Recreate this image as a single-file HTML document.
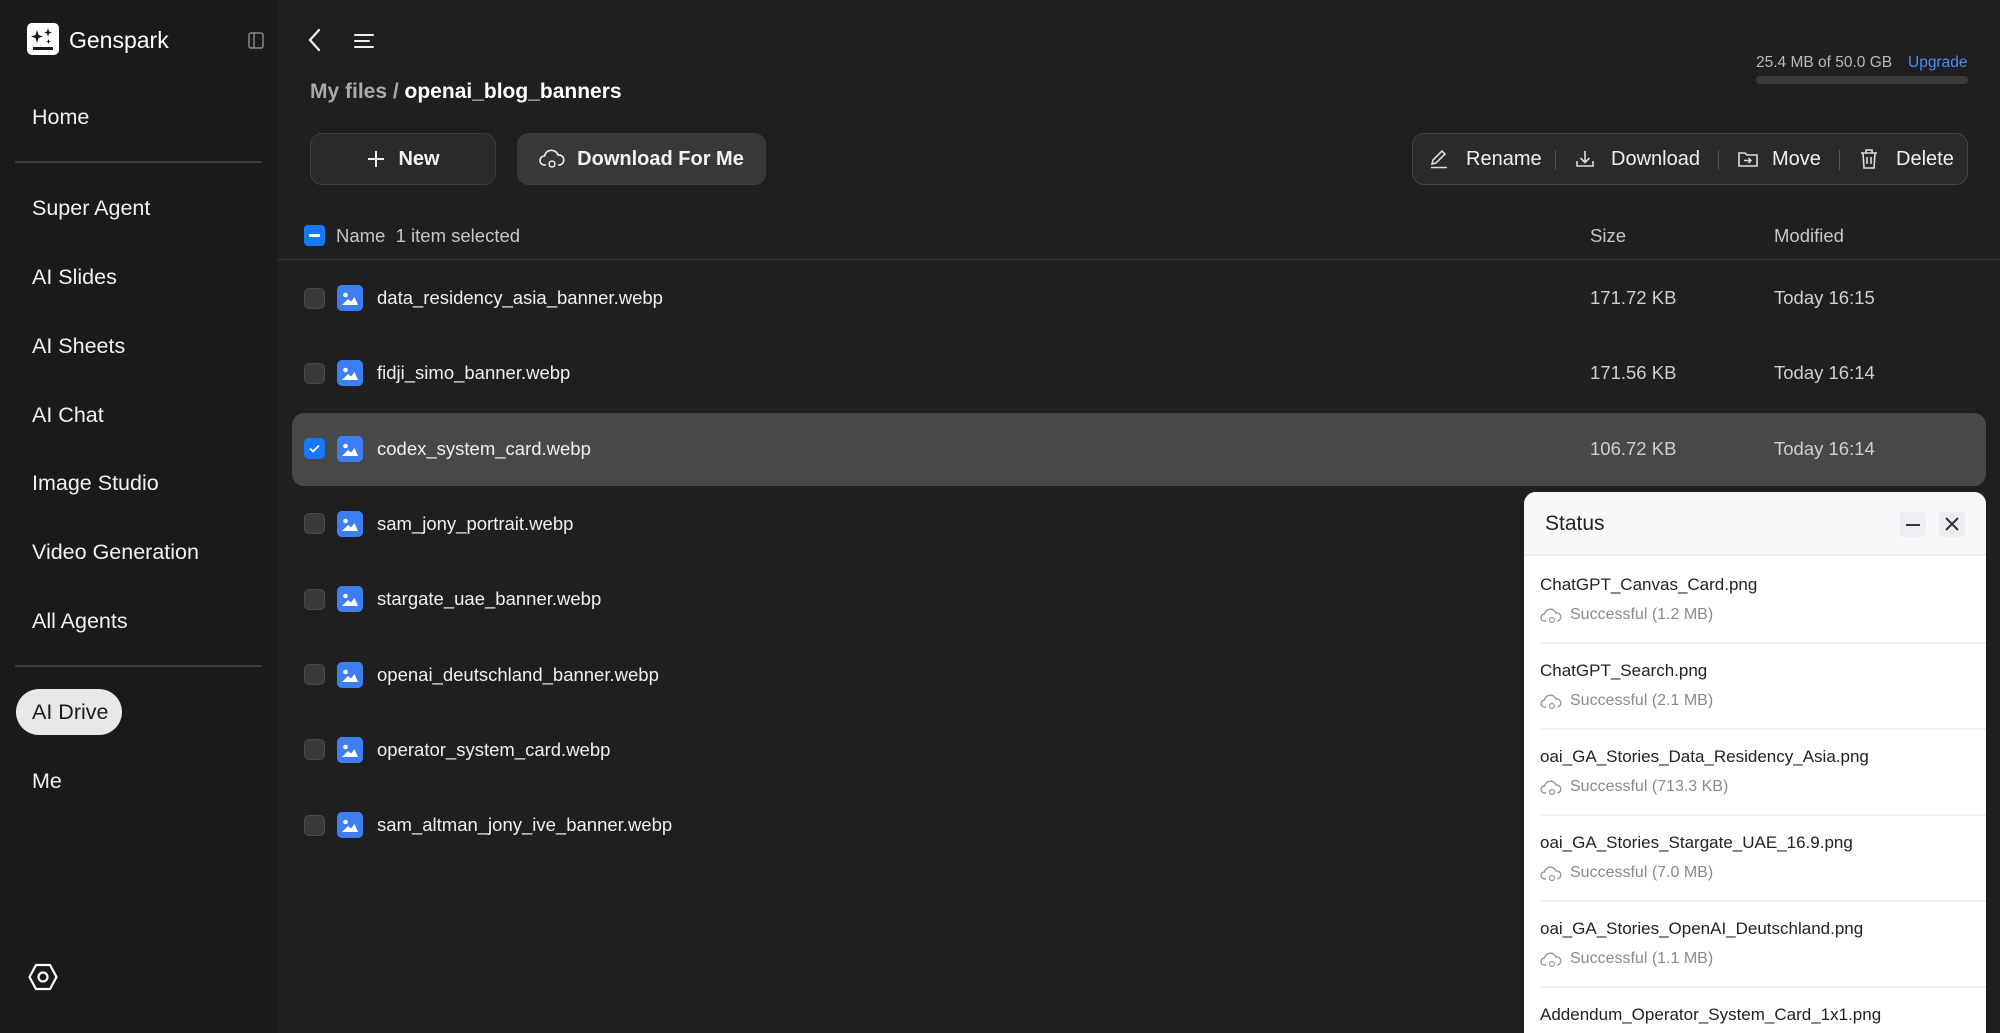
<!DOCTYPE html>
<html style="overflow:hidden;width:2000px;height:1033px"><head><meta charset="utf-8"><style>
*{box-sizing:border-box;margin:0;padding:0}
body{width:2000px;height:1033px;overflow:hidden;background:#1f1f1f;font-family:"Liberation Sans",Arial,sans-serif;color:#eee;position:relative}
.abs{position:absolute}
#side{left:0;top:0;width:277px;height:1033px;background:#1a1a1a}
.nav{position:absolute;left:32px;font-size:21.5px;color:#f2f2f2;line-height:26px}
.hr{position:absolute;left:15px;width:247px;height:2px;background:#3a3a3a}
.btn{position:absolute;top:133px;height:52px;border-radius:12px;border:1px solid #3d3d3d;display:flex;align-items:center;justify-content:center;font-size:20px;font-weight:bold;color:#f2f2f2;gap:12px}
.row{position:absolute;left:292px;width:1694px;height:73px;border-radius:12px}
.cb{position:absolute;left:304px;width:21px;height:21px;border-radius:5px;background:#3a3a3a;border:1px solid #4a4a4a}
.fi{position:absolute;left:337px;width:26px;height:26px;border-radius:5px;background:#3d7ef0}
.fn{position:absolute;left:377px;font-size:18.5px;color:#f0f0f0}
.sz{position:absolute;left:1590px;font-size:18.5px;color:#cfcfcf}
.dt{position:absolute;left:1774px;font-size:18.5px;color:#cfcfcf}
#panel{left:1524px;top:492px;width:462px;height:541px;background:#fff;border-radius:12px 12px 0 0;overflow:hidden}
.it{position:absolute;left:16px;right:0;height:86px;border-bottom:2px solid #f0f1f3}
.it .n{position:absolute;left:0;top:17px;font-size:17px;color:#222}
.it .s{position:absolute;left:30px;top:48px;font-size:16px;color:#8a8a8a}
.it svg{position:absolute;left:0;top:49px}
</style></head><body>
<div id="side" class="abs">
  <svg class="abs" style="left:27px;top:23px" width="32" height="32" viewBox="0 0 32 32"><rect width="32" height="32" rx="5" fill="#fff"/><path d="M10 7 L11.5 12 L16 13.5 L11.5 15 L10 20 L8.5 15 L4 13.5 L8.5 12Z" fill="#1a1a1a"/><path d="M21 5 L22 8.5 L25 9.5 L22 10.5 L21 14 L20 10.5 L17 9.5 L20 8.5Z" fill="#1a1a1a"/><path d="M21.5 16 L22.3 18 L24 18.5 L22.3 19 L21.5 21 L20.7 19 L19 18.5 L20.7 18Z" fill="#1a1a1a"/><rect x="6" y="24" width="20" height="3" fill="#1a1a1a"/></svg>
  <div class="abs" style="left:69px;top:27px;font-size:23px;color:#fff;font-weight:500">Genspark</div>
  <svg class="abs" style="left:248px;top:32px" width="16" height="17" viewBox="0 0 16 17"><rect x="1" y="1" width="14" height="15" rx="2" fill="none" stroke="#888" stroke-width="1.5"/><line x1="6" y1="1" x2="6" y2="16" stroke="#888" stroke-width="1.5"/></svg>
  <div class="nav" style="top:104px">Home</div>
  <div class="hr" style="top:161px"></div>
  <div class="nav" style="top:195px">Super Agent</div>
  <div class="nav" style="top:264px">AI Slides</div>
  <div class="nav" style="top:333px">AI Sheets</div>
  <div class="nav" style="top:402px">AI Chat</div>
  <div class="nav" style="top:470px">Image Studio</div>
  <div class="nav" style="top:539px">Video Generation</div>
  <div class="nav" style="top:608px">All Agents</div>
  <div class="hr" style="top:665px"></div>
  <div class="abs" style="left:16px;top:689px;width:106px;height:46px;border-radius:23px;background:#e8e8e8"></div>
  <div class="nav" style="top:699px;color:#1a1a1a">AI Drive</div>
  <div class="nav" style="top:768px">Me</div>
  <svg class="abs" style="left:28px;top:963px" width="30" height="28" viewBox="0 0 30 28"><path d="M8 2 H22 L28.5 14 L22 26 H8 L1.5 14Z" fill="none" stroke="#fff" stroke-width="2.2"/><circle cx="15" cy="14" r="4.5" fill="none" stroke="#fff" stroke-width="2.2"/></svg>
</div>

<svg class="abs" style="left:307px;top:28px" width="16" height="24" viewBox="0 0 16 24"><path d="M12 2 L3 12 L12 22" fill="none" stroke="#eee" stroke-width="2.2" stroke-linecap="round"/></svg>
<svg class="abs" style="left:353px;top:31px" width="22" height="18" viewBox="0 0 22 18"><path d="M2 4 H20 M2 10 H16 M2 16 H20" stroke="#eee" stroke-width="2" stroke-linecap="round"/></svg>

<div class="abs" style="left:1756px;top:54px;font-size:15.5px;color:#bbb">25.4 MB of 50.0 GB</div>
<div class="abs" style="left:1908px;top:54px;font-size:15.5px;color:#4b8ef5">Upgrade</div>
<div class="abs" style="left:1756px;top:76px;width:212px;height:8px;border-radius:4px;background:#3a3a3a"></div>

<div class="abs" style="left:310px;top:80px;font-size:21px;font-weight:bold"><span style="color:#aaa">My files / </span><span style="color:#fff">openai_blog_banners</span></div>

<div class="btn" style="left:310px;width:186px;background:#2a2a2a"><svg width="20" height="20" viewBox="0 0 20 20"><path d="M10 2V18M2 10H18" stroke="#eee" stroke-width="2"/></svg>New</div>
<div class="btn" style="left:517px;width:249px;background:#383838"><svg width="26" height="22" viewBox="0 0 26 22"><path d="M7 17 H5.5 A4.5 4.5 0 0 1 5.5 8 A7 7 0 0 1 19 7 A5 5 0 0 1 20.5 17 H19" fill="none" stroke="#eee" stroke-width="1.6"/><circle cx="13" cy="16" r="3" fill="none" stroke="#eee" stroke-width="1.4"/></svg>Download For Me</div>

<div class="abs" style="left:1412px;top:133px;width:556px;height:52px;border-radius:12px;border:1px solid #444;background:#2a2a2a;font-size:20px;color:#f0f0f0">
  <svg class="abs" style="left:16px;top:15px" width="20" height="20" viewBox="0 0 20 20"><path d="M3 15 L4 11 L13 2 L16 5 L7 14Z M2 18.5H18" fill="none" stroke="#ddd" stroke-width="1.6"/></svg>
  <span class="abs" style="left:53px;top:14px">Rename</span>
  <div class="abs" style="left:142px;top:16px;width:1px;height:20px;background:#555"></div>
  <svg class="abs" style="left:162px;top:15px" width="20" height="20" viewBox="0 0 20 20"><path d="M10 2V13M5.5 9L10 13.5 14.5 9M2 12V17H18V12" fill="none" stroke="#ddd" stroke-width="1.6"/></svg>
  <span class="abs" style="left:198px;top:14px">Download</span>
  <div class="abs" style="left:305px;top:16px;width:1px;height:20px;background:#555"></div>
  <svg class="abs" style="left:324px;top:15px" width="22" height="20" viewBox="0 0 22 20"><path d="M2 4H8L10 6H20V17H2Z" fill="none" stroke="#ddd" stroke-width="1.6"/><path d="M7 11.5H14M11.5 9L14 11.5 11.5 14" fill="none" stroke="#ddd" stroke-width="1.5"/></svg>
  <span class="abs" style="left:359px;top:14px">Move</span>
  <div class="abs" style="left:426px;top:16px;width:1px;height:20px;background:#555"></div>
  <svg class="abs" style="left:446px;top:14px" width="20" height="22" viewBox="0 0 20 22"><path d="M2 5H18M7 5V2H13V5M4 5L5 20H15L16 5M8 9V16M12 9V16" fill="none" stroke="#ddd" stroke-width="1.6"/></svg>
  <span class="abs" style="left:483px;top:14px">Delete</span>
</div>

<div class="abs" style="left:304px;top:225px;width:21px;height:21px;border-radius:4px;background:#1677ff"><div style="position:absolute;left:5px;top:9px;width:11px;height:3px;background:#fff;border-radius:1px"></div></div>
<div class="abs" style="left:336px;top:225px;font-size:18.5px;color:#c8c8c8">Name&nbsp;&nbsp;1 item selected</div>
<div class="abs" style="left:1590px;top:225px;font-size:18.5px;color:#c8c8c8">Size</div>
<div class="abs" style="left:1774px;top:225px;font-size:18.5px;color:#c8c8c8">Modified</div>
<div class="abs" style="left:277px;top:259px;width:1723px;height:1px;background:#333"></div>

<div class="row" style="top:413px;background:#484848"></div>

<div id="rows"></div>
<script>
var f=[["data_residency_asia_banner.webp","171.72 KB","Today 16:15"],["fidji_simo_banner.webp","171.56 KB","Today 16:14"],["codex_system_card.webp","106.72 KB","Today 16:14"],["sam_jony_portrait.webp"],["stargate_uae_banner.webp"],["openai_deutschland_banner.webp"],["operator_system_card.webp"],["sam_altman_jony_ive_banner.webp"]];
var h="";
f.forEach(function(r,i){var c=298+i*75.3;
var sel=i==2;
h+='<div class="cb" style="top:'+(c-10.5)+'px;'+(sel?'background:#1677ff;border-color:#1677ff':'')+'">'+(sel?'<svg width="19" height="19" viewBox="0 0 19 19"><path d="M5 9.5L8 12.5 14 6.5" fill="none" stroke="#fff" stroke-width="1.8"/></svg>':'')+'</div>';
h+='<svg class="fi" style="top:'+(c-13)+'px" viewBox="0 0 26 26"><rect width="26" height="26" rx="5" fill="#3d7ef0"/><circle cx="8.5" cy="10" r="2.3" fill="#fff"/><path d="M5 20 L11 14 L14 16.5 L17.5 12 L21 20Z" fill="#fff"/></svg>';
h+='<div class="fn" style="top:'+(c-11)+'px">'+r[0]+'</div>';
if(r[1]){h+='<div class="sz" style="top:'+(c-11)+'px">'+r[1]+'</div><div class="dt" style="top:'+(c-11)+'px">'+r[2]+'</div>';}
});
document.getElementById("rows").innerHTML=h;
</script>

<div id="panel" class="abs">
  <div class="abs" style="left:0;top:0;width:462px;height:64px;background:#f7f8fa;border-bottom:2px solid #eceef1"></div>
  <div class="abs" style="left:21px;top:20px;font-size:21px;color:#222">Status</div>
  <div class="abs" style="left:376px;top:20px;width:26px;height:25px;border-radius:4px;background:#eceef1"><div style="position:absolute;left:6px;top:12px;width:14px;height:2px;background:#333"></div></div>
  <div class="abs" style="left:415px;top:20px;width:26px;height:25px;border-radius:4px;background:#eceef1"><svg width="26" height="25" viewBox="0 0 26 25"><path d="M7 6L19 18M19 6L7 18" stroke="#333" stroke-width="2"/></svg></div>
  <div id="items"></div>
</div>
<script>
var it=[["ChatGPT_Canvas_Card.png","1.2 MB"],["ChatGPT_Search.png","2.1 MB"],["oai_GA_Stories_Data_Residency_Asia.png","713.3 KB"],["oai_GA_Stories_Stargate_UAE_16.9.png","7.0 MB"],["oai_GA_Stories_OpenAI_Deutschland.png","1.1 MB"],["Addendum_Operator_System_Card_1x1.png",""]];
var s="";
it.forEach(function(r,i){s+='<div class="it" style="top:'+(66+i*86)+'px"><div class="n">'+r[0]+'</div>'+(r[1]?'<svg width="22" height="18" viewBox="0 0 22 18"><path d="M6 14H4.5A3.5 3.5 0 0 1 4.5 7 A6 6 0 0 1 16 6 A4 4 0 0 1 17.5 14" fill="none" stroke="#999" stroke-width="1.4"/><circle cx="12" cy="13" r="2.5" fill="none" stroke="#999" stroke-width="1.2"/></svg><div class="s">Successful ('+r[1]+')</div>':'')+'</div>';});
document.getElementById("items").innerHTML=s;
</script>
</body></html>
